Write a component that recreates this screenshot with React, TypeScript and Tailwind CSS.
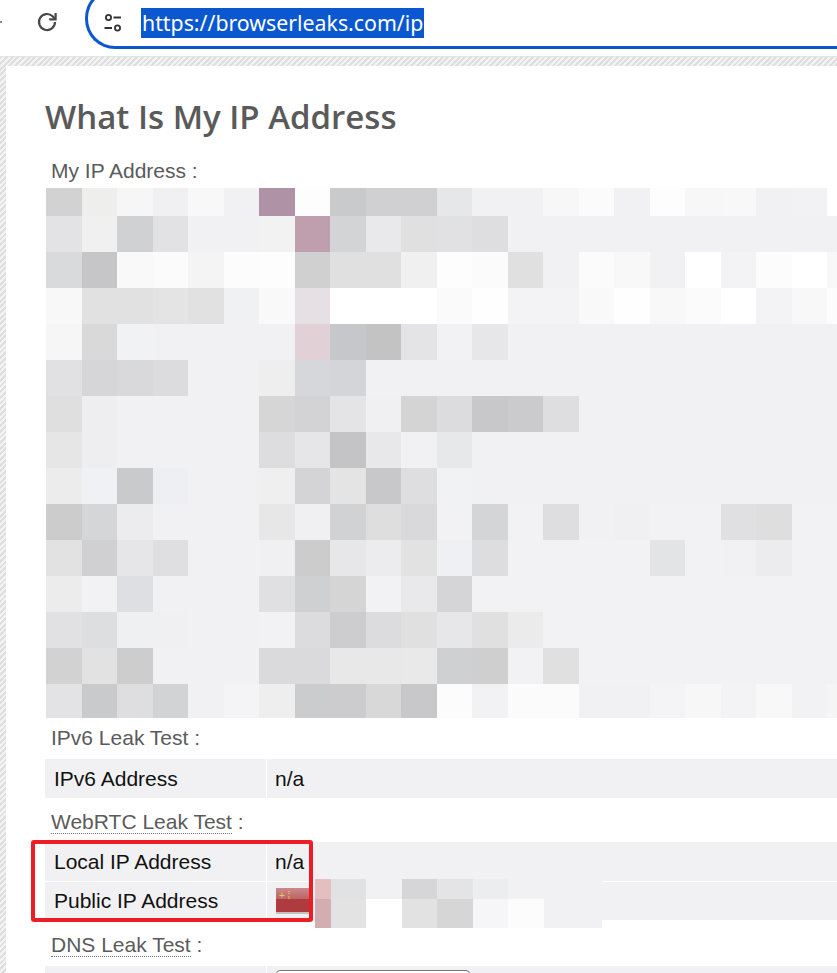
const mosaic: string[][] = [
  ["d2d2d2", "eeeeec", "f6f6f6", "f0f0f2", "f8f8f8", "f1f1f3", "b092a6", "fdfdfd", "c9cacc", "d0d0d2", "d0d0d2", "e6e7e9", "f1f1f3", "f1f1f3", "f7f7f7", "fbfbfb", "f1f1f3", "fdfdfd", "f7f7f7", "f8f8f8", "f1f1f3", "f2f2f4", "ffffff"],
  ["e3e3e5", "f0f0f0", "d0d1d3", "e2e2e4", "f1f1f3", "f1f1f3", "f2f2f3", "bf9fae", "d3d4d6", "e9e9eb", "e0e0e0", "e1e1e3", "dedee0", "f1f1f3", "f1f1f3", "f1f1f3", "f1f1f3", "f1f1f3", "f1f1f3", "f1f1f3", "f1f1f3", "f1f1f3", "f1f1f3"],
  ["d9dadc", "c6c6c8", "f9f9f9", "fbfbfb", "f4f4f4", "fcfcfc", "fdfdfd", "d0d0d0", "e0e0e0", "e0e0e0", "f0f0f0", "fdfdfd", "fbfbfb", "e0e0e0", "f1f1f3", "fbfbfb", "f8f8f8", "f1f1f3", "ffffff", "f3f3f5", "fcfcfc", "ffffff", "f8f8f8"],
  ["f8f8f8", "e1e1e1", "e1e1e1", "e4e4e4", "e1e1e1", "f0f1f3", "f9f9f9", "e6dfe4", "ffffff", "ffffff", "ffffff", "fafafa", "fefefe", "f3f3f5", "f3f3f5", "f9f9f9", "fefefe", "f8f8f8", "fbfbfb", "ffffff", "f3f3f5", "f8f8f8", "fcfcfc"],
  ["f6f6f6", "d9d9d9", "f1f2f4", "f1f1f3", "f1f1f3", "f1f1f3", "f1f1f3", "e2d0d7", "c6c7cb", "c3c3c3", "e4e4e6", "f2f2f4", "e7e7e9", "f1f1f3", "f1f1f3", "f1f1f3", "f1f1f3", "f1f1f3", "f1f1f3", "f1f1f3", "f1f1f3", "f1f1f3", "f1f1f3"],
  ["e1e1e3", "d6d6d8", "d9d9db", "dcdcde", "f1f1f3", "f1f1f3", "eeeeee", "d6d7db", "d4d5d9", "f1f1f3", "f1f1f3", "f1f1f3", "f1f1f3", "f1f1f3", "f1f1f3", "f1f1f3", "f1f1f3", "f1f1f3", "f1f1f3", "f1f1f3", "f1f1f3", "f1f1f3", "f1f1f3"],
  ["dfdfdf", "eeeef0", "f1f1f3", "f1f1f3", "f1f1f3", "f1f1f3", "d6d6d6", "d3d3d5", "e4e4e6", "f0f0f2", "d4d4d4", "dcdcde", "c8c8ca", "cbcbcd", "dedee0", "f1f1f3", "f1f1f3", "f1f1f3", "f1f1f3", "f1f1f3", "f1f1f3", "f1f1f3", "f1f1f3"],
  ["e6e6e6", "eeeef0", "f1f1f3", "f1f1f3", "f1f1f3", "f1f1f3", "dddde0", "e6e6e8", "c4c4c6", "e8e8ea", "f1f1f3", "e7e8ea", "f1f1f3", "f1f1f3", "f1f1f3", "f1f1f3", "f1f1f3", "f1f1f3", "f1f1f3", "f1f1f3", "f1f1f3", "f1f1f3", "f1f1f3"],
  ["ececec", "f0f1f5", "c9cacc", "eeeff3", "f1f1f3", "f1f1f3", "efefef", "d4d4d6", "e4e4e4", "c8c8ca", "dedee0", "f1f2f4", "f1f1f3", "f1f1f3", "f1f1f3", "f1f1f3", "f1f1f3", "f1f1f3", "f1f1f3", "f1f1f3", "f1f1f3", "f1f1f3", "f1f1f3"],
  ["cccccc", "d5d6d8", "ececee", "f1f1f3", "f1f1f3", "f1f1f3", "e7e7e7", "f0f0f2", "d1d2d4", "dedede", "d9d9db", "f2f2f4", "d4d5d7", "f2f2f4", "dedee0", "f1f1f3", "f0f0f2", "f2f2f4", "f2f2f4", "e0e0e2", "dedede", "f2f2f4", "f2f2f4"],
  ["e2e2e2", "d0d0d2", "e6e6e8", "dfdfe1", "f1f1f3", "f1f1f3", "f0f0f2", "cccccc", "e7e7e9", "ececee", "e2e2e2", "eff0f4", "dddde0", "f2f2f4", "f2f2f4", "f2f2f4", "f2f2f4", "e3e4e6", "f2f2f4", "f1f1f3", "ececee", "f2f2f4", "f2f2f4"],
  ["ececec", "f2f2f4", "dedfe3", "f1f1f3", "f1f1f3", "f1f1f3", "e0e0e2", "cfd0d2", "d5d5d5", "f2f2f4", "e9e9eb", "d5d5d7", "f2f2f4", "f2f2f4", "f2f2f4", "f2f2f4", "f2f2f4", "f2f2f4", "f2f2f4", "f2f2f4", "f2f2f4", "f2f2f4", "f2f2f4"],
  ["e1e1e3", "dddee0", "eff0f2", "f0f0f2", "f1f1f3", "f1f1f3", "f2f2f4", "dcdcde", "cdcdcf", "dcdcde", "e0e0e0", "e7e7e9", "e0e0e0", "ebebeb", "f2f2f4", "f2f2f4", "f2f2f4", "f2f2f4", "f2f2f4", "f2f2f4", "f2f2f4", "f2f2f4", "f2f2f4"],
  ["d2d2d2", "e2e2e3", "cdcdcd", "f1f1f3", "f1f1f3", "f1f1f3", "dadadc", "dadadc", "e8e8e8", "e8e8e8", "e9e9ea", "ced0d2", "cfcfcf", "f2f2f4", "e0e0e0", "f2f2f4", "f2f2f4", "f2f2f4", "f2f2f4", "f2f2f4", "f2f2f4", "f2f2f4", "f2f2f4"],
  ["e3e3e5", "c9cacc", "dedee0", "d2d3d5", "f1f1f3", "f4f4f6", "eeeeee", "cbcccd", "cccccf", "d8d8d8", "c8c8ca", "fcfcfc", "f2f2f4", "fbfbfb", "fbfbfb", "f1f1f3", "f1f1f3", "f4f4f6", "f7f7f7", "f3f3f5", "f8f8f8", "f2f2f4", "f5f5f5"],
];

const publicIpTop = ["e3bfc0", "e1e2e4", "f1f1f3", "d6d6d8", "e4e4e6", "ecedef", "f1f1f3", "f1f1f3"];
const publicIpBottom = ["d2aeb2", "e3e3e3", "ffffff", "e2e2e2", "d6d6d6", "f6f6f8", "fcfcfc", "f1f1f3"];

function SectionTitle({ children, dotted }: { children: string; dotted?: boolean }) {
  return (
    <div className="pl-[6px] text-[21px] leading-[24px] text-[#5b5b5b]">
      {dotted ? (
        <>
          <span className="border-b border-dotted border-[#777]">{children}</span> :
        </>
      ) : (
        `${children} :`
      )}
    </div>
  );
}

function Row({ label, children, h = "h-[39px]" }: { label?: string; children?: React.ReactNode; h?: string }) {
  return (
    <div className={`flex text-[21px] text-[#111] ${h}`}>
      <div className="flex w-[221px] shrink-0 items-center bg-[#f1f1f3] pl-[9px]">{label}</div>
      <div className="ml-px flex flex-1 items-center bg-[#f1f1f3] pl-[8px]">{children}</div>
    </div>
  );
}

export default function App() {
  return (
    <div className="h-[973px] w-[837px] overflow-hidden bg-white font-['Liberation_Sans',Arial,sans-serif]">
      {/* browser toolbar */}
      <div className="flex h-[57px] items-start border-b border-[#e4e4e4] bg-white">
        <div className="mt-[21px] h-[2px] w-[2px] bg-[#8a8a8a]" />
        <svg className="ml-[33px] mt-[10px] h-[24px] w-[24px]" viewBox="0 0 24 24" fill="none" stroke="#474747" strokeWidth="2.2">
          <path d="M20 12a8 8 0 1 1-2.4-5.7L20 8.8" />
          <path d="M20.6 3v6.4h-6.4" />
        </svg>
        <div className="ml-[26px] -mt-[12px] flex h-[61px] flex-1 items-center rounded-l-[30px] border-y-[3px] border-l-[3px] border-[#0b57d0] pl-[15px] pt-[9px]">
          <svg className="h-[20px] w-[20px] shrink-0" viewBox="0 0 20 20" fill="none" stroke="#333" strokeWidth="1.8">
            <circle cx="5.5" cy="4.5" r="2.6" />
            <path d="M10.5 4.5h7.5M1.5 15h7.5" />
            <circle cx="14.5" cy="15" r="2.6" />
          </svg>
          <span className="ml-[18px] bg-[#0b57d0] px-px font-['Noto_Sans',sans-serif] text-[21.3px] leading-[30px] text-white">
            https://browserleaks.com/ip
          </span>
        </div>
      </div>

      {/* hatched page background */}
      <div className="h-[916px] bg-[repeating-linear-gradient(135deg,#dedede_0,#dedede_2px,#f3f3f3_2px,#f3f3f3_4px)] pl-[6px] pt-[9px]">
        <div className="relative h-full bg-white pl-[39px]">
          <h1 className="pt-[29px] font-['Open_Sans',sans-serif] text-[33px] font-semibold leading-[44px] text-[#5a5a5a]">
            What Is My IP Address
          </h1>
          <div className="mt-[20px]">
            <SectionTitle>My IP Address</SectionTitle>
          </div>
          <div className="ml-px mt-[5px] grid grid-cols-[repeat(23,35.5px)] grid-rows-[28px_repeat(13,36px)_34px]">
            {mosaic.flat().map((color, i) => (
              <div key={i} style={{ backgroundColor: `#${color}` }} />
            ))}
          </div>

          <div className="mt-[8px]">
            <SectionTitle>IPv6 Leak Test</SectionTitle>
          </div>
          <div className="mt-[9px]">
            <Row label="IPv6 Address">n/a</Row>
          </div>

          <div className="mt-[12px]">
            <SectionTitle dotted>WebRTC Leak Test</SectionTitle>
          </div>
          <div className="mt-[8px] flex flex-col gap-px">
            <Row label="Local IP Address">n/a</Row>
            <Row label="Public IP Address" h="h-[38px]">
              <div className="ml-px h-[26px] w-[35px] shrink-0 border-b-2 border-[#c4c0c0] bg-[linear-gradient(#c98a8b_0,#bd6364_45%,#ad3b40_46%,#ad3b40_100%)] pl-[3px] pt-[3px] text-[10px] leading-[9px] text-[#e8cf5c]">
                + ⁞
              </div>
            </Row>
          </div>

          <div className="mt-[13px]">
            <SectionTitle dotted>DNS Leak Test</SectionTitle>
          </div>
          <div className="mt-[9px]">
            <Row>
              <div className="ml-px mt-[4px] h-[31px] w-[194px] self-start rounded-[4px] border border-[#767676] bg-white" />
            </Row>
          </div>

          {/* pixelated overlay on the public ip value */}
          <div className="absolute left-[309px] top-[813px] grid grid-cols-[16px_35px_36px_35px_36px_35px_36px_58px] grid-rows-[20px_29px]">
            {publicIpTop.concat(publicIpBottom).map((color, i) => (
              <div key={i} style={{ backgroundColor: `#${color}` }} />
            ))}
          </div>

          {/* red annotation box */}
          <div className="absolute left-[25px] top-[774px] h-[82px] w-[282px] rounded-[3px] border-4 border-[#ee1c25]" />
        </div>
      </div>
    </div>
  );
}
